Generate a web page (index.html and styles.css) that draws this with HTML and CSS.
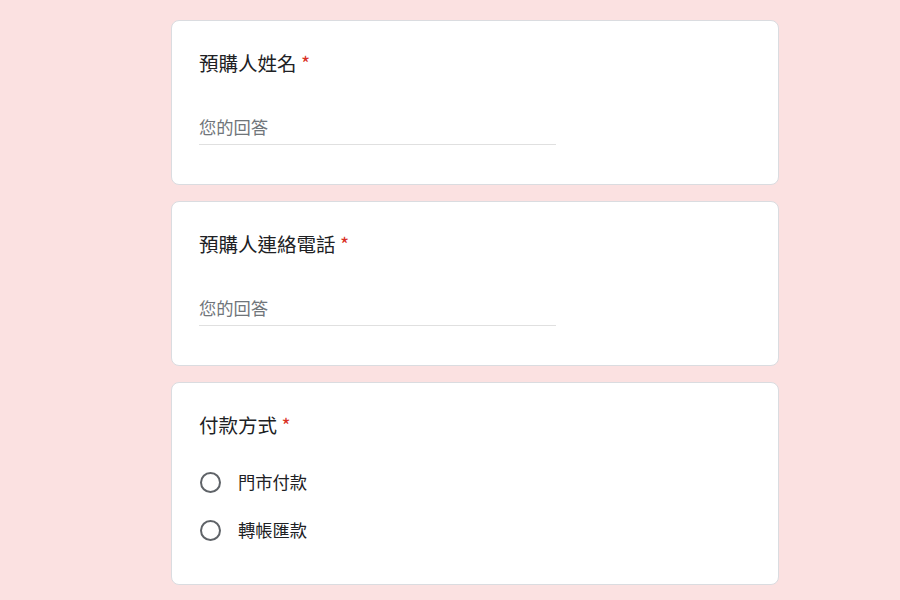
FILE: index.html
```html
<!DOCTYPE html>
<html lang="zh-Hant">
<head>
<meta charset="utf-8">
<title>預購表單</title>
<link rel="stylesheet" href="styles.css">
</head>
<body>
<main class="form">
  <section class="card">
    <div class="q-title">預購人姓名 <span class="req">*</span></div>
    <div class="answer">您的回答</div>
  </section>
  <section class="card">
    <div class="q-title">預購人連絡電話 <span class="req">*</span></div>
    <div class="answer">您的回答</div>
  </section>
  <section class="card card-choice">
    <div class="q-title">付款方式 <span class="req">*</span></div>
    <div class="options">
      <label class="option"><span class="radio"></span><span class="opt-text">門市付款</span></label>
      <label class="option"><span class="radio"></span><span class="opt-text">轉帳匯款</span></label>
    </div>
  </section>
</main>
</body>
</html>
```
FILE: styles.css
```css
html, body {
  margin: 0;
  padding: 0;
  background: #fbe1e1;
  font-family: "Noto Sans CJK TC", "Noto Sans", sans-serif;
  color: #202124;
}
.form {
  width: 608px;
  margin-left: 171px;
  padding-top: 20px;
  display: flex;
  flex-direction: column;
  gap: 16px;
}
.card {
  background: #fff;
  border: 1px solid #dadce0;
  border-radius: 8px;
  padding: 30px 27px 39px 27px;
}
.card-choice {
  padding-bottom: 30px;
}
.q-title {
  font-size: 19.5px;
  line-height: 24px;
  color: #202124;
}
.req {
  color: #d93025;
}
.answer {
  margin-top: 36px;
  width: 357px;
  font-size: 17.3px;
  line-height: 24px;
  padding: 4px 0 5px;
  color: #70757a;
  border-bottom: 1px solid #e0e0e0;
}
.options {
  margin-top: 21px;
  display: flex;
  flex-direction: column;
}
.option {
  height: 48px;
  display: flex;
  align-items: center;
  gap: 17px;
  padding-left: 1px;
}
.radio {
  width: 17px;
  height: 17px;
  border: 2.5px solid #5f6368;
  border-radius: 50%;
  flex: none;
}
.opt-text {
  font-size: 17.3px;
  line-height: 24px;
  color: #202124;
}
```
